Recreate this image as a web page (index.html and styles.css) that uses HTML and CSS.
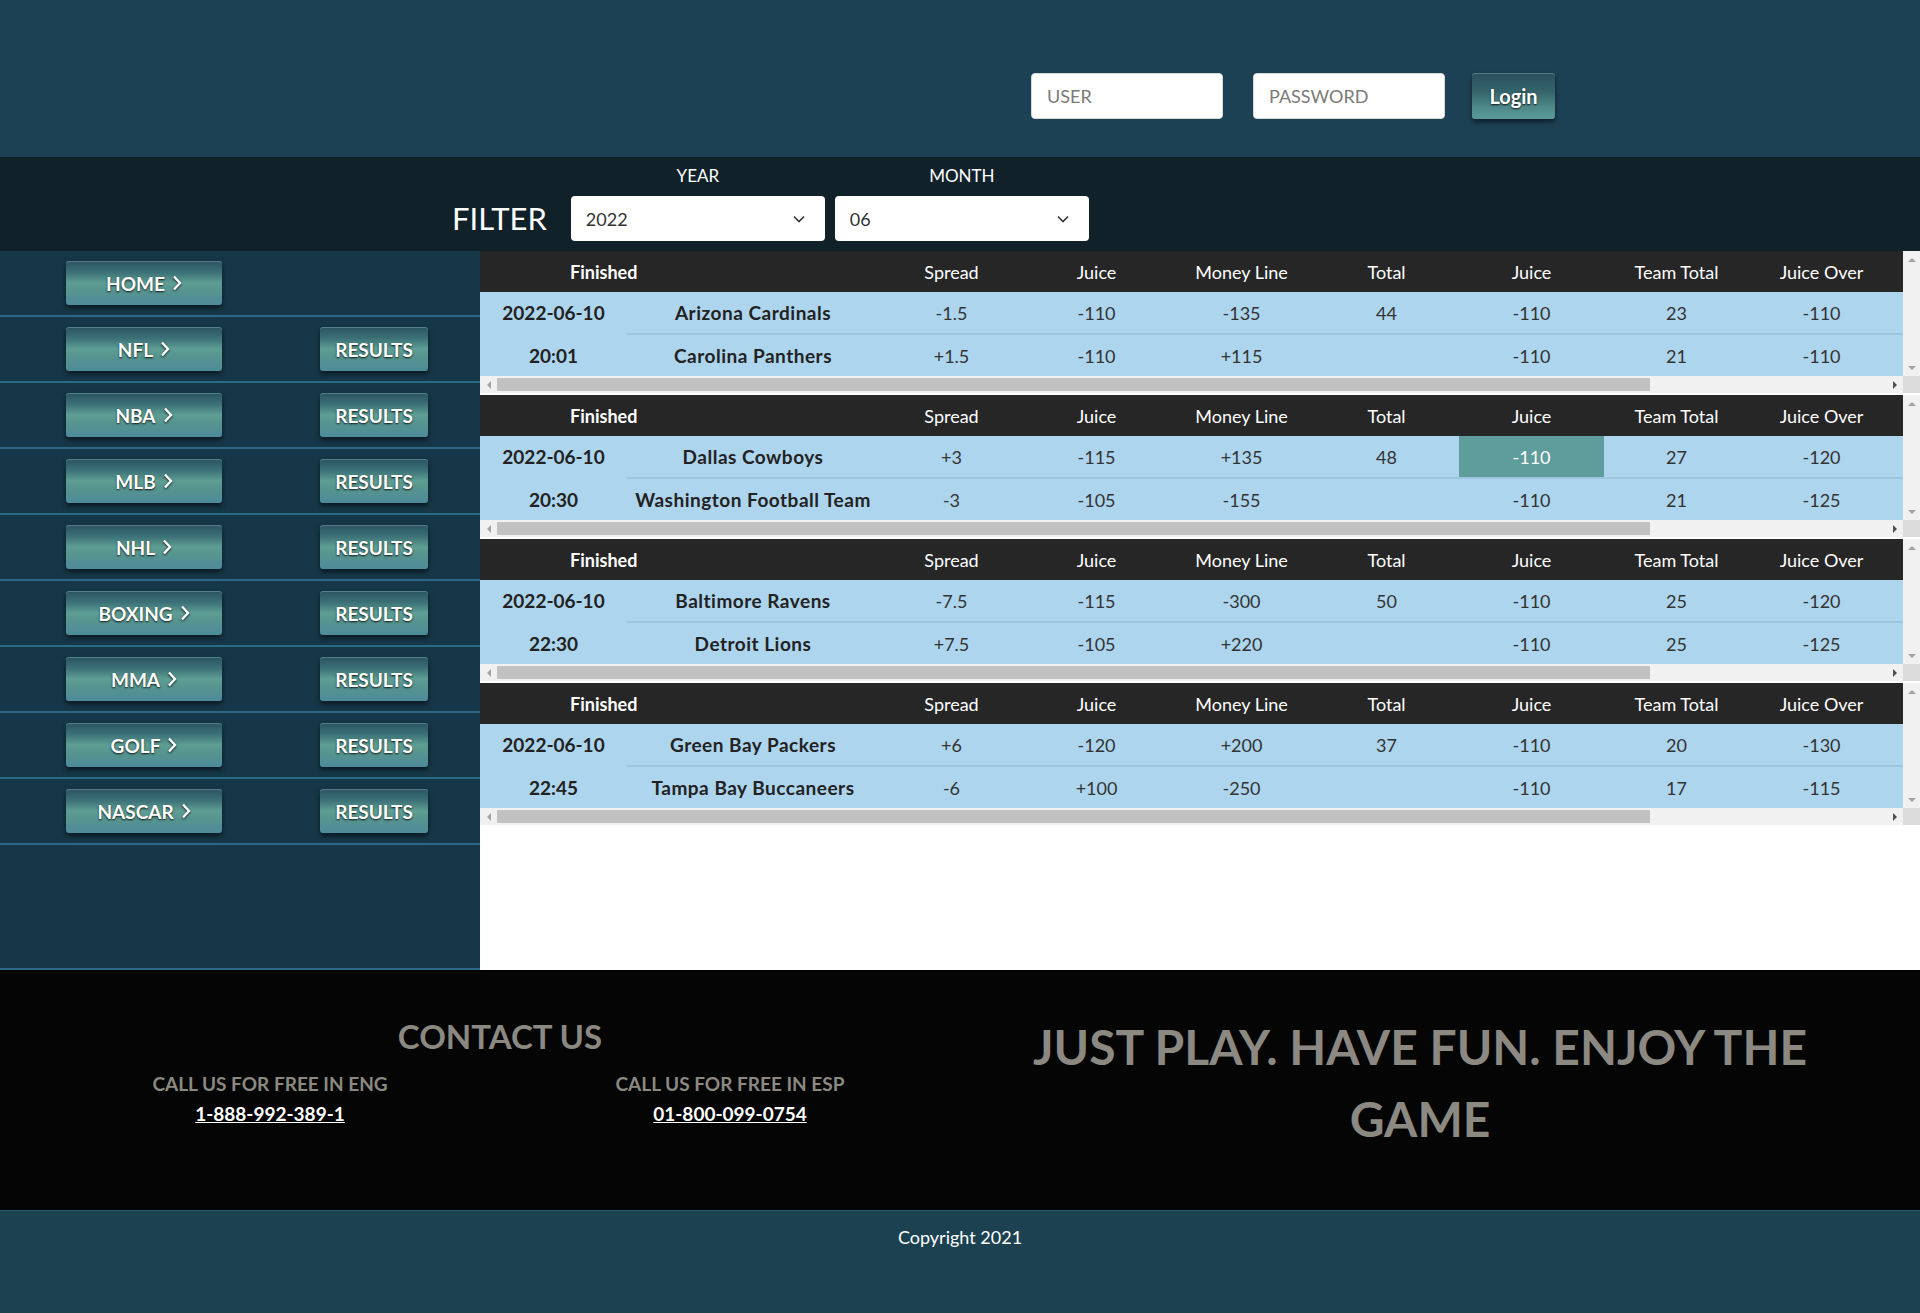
FILE: index.html
```html
<!DOCTYPE html>
<html lang="en">
<head>
<meta charset="utf-8">
<title>Results</title>
<link rel="stylesheet" href="styles.css">
</head>
<body>
<header class="topbar">
  <form class="login">
    <input class="field field-user" type="text" placeholder="USER">
    <input class="field field-pass" type="password" placeholder="PASSWORD">
    <button class="btn btn-login" type="button">Login</button>
  </form>
</header>

<section class="filterbar">
  <span class="filter-title">FILTER</span>
  <div class="filter-group">
    <span class="filter-label">YEAR</span>
    <div class="select"><span>2022</span><svg class="select-chev" width="12" height="8" viewBox="0 0 12 8"><path d="M1 1.5 L6 6.5 L11 1.5" fill="none" stroke="#333" stroke-width="1.6"/></svg></div>
  </div>
  <div class="filter-group">
    <span class="filter-label">MONTH</span>
    <div class="select"><span>06</span><svg class="select-chev" width="12" height="8" viewBox="0 0 12 8"><path d="M1 1.5 L6 6.5 L11 1.5" fill="none" stroke="#333" stroke-width="1.6"/></svg></div>
  </div>
</section>

<div class="layout">
  <nav class="sidebar">
    <div class="sport-row"><a class="btn btn-sport" href="#">HOME<svg class="chev" width="10" height="16" viewBox="0 0 10 16"><path d="M2 1.5 L8 8 L2 14.5" fill="none" stroke="#fff" stroke-width="2.4"/></svg></a></div>
    <div class="sport-row"><a class="btn btn-sport" href="#">NFL<svg class="chev" width="10" height="16" viewBox="0 0 10 16"><path d="M2 1.5 L8 8 L2 14.5" fill="none" stroke="#fff" stroke-width="2.4"/></svg></a><a class="btn btn-results" href="#">RESULTS</a></div>
    <div class="sport-row"><a class="btn btn-sport" href="#">NBA<svg class="chev" width="10" height="16" viewBox="0 0 10 16"><path d="M2 1.5 L8 8 L2 14.5" fill="none" stroke="#fff" stroke-width="2.4"/></svg></a><a class="btn btn-results" href="#">RESULTS</a></div>
    <div class="sport-row"><a class="btn btn-sport" href="#">MLB<svg class="chev" width="10" height="16" viewBox="0 0 10 16"><path d="M2 1.5 L8 8 L2 14.5" fill="none" stroke="#fff" stroke-width="2.4"/></svg></a><a class="btn btn-results" href="#">RESULTS</a></div>
    <div class="sport-row"><a class="btn btn-sport" href="#">NHL<svg class="chev" width="10" height="16" viewBox="0 0 10 16"><path d="M2 1.5 L8 8 L2 14.5" fill="none" stroke="#fff" stroke-width="2.4"/></svg></a><a class="btn btn-results" href="#">RESULTS</a></div>
    <div class="sport-row"><a class="btn btn-sport" href="#">BOXING<svg class="chev" width="10" height="16" viewBox="0 0 10 16"><path d="M2 1.5 L8 8 L2 14.5" fill="none" stroke="#fff" stroke-width="2.4"/></svg></a><a class="btn btn-results" href="#">RESULTS</a></div>
    <div class="sport-row"><a class="btn btn-sport" href="#">MMA<svg class="chev" width="10" height="16" viewBox="0 0 10 16"><path d="M2 1.5 L8 8 L2 14.5" fill="none" stroke="#fff" stroke-width="2.4"/></svg></a><a class="btn btn-results" href="#">RESULTS</a></div>
    <div class="sport-row"><a class="btn btn-sport" href="#">GOLF<svg class="chev" width="10" height="16" viewBox="0 0 10 16"><path d="M2 1.5 L8 8 L2 14.5" fill="none" stroke="#fff" stroke-width="2.4"/></svg></a><a class="btn btn-results" href="#">RESULTS</a></div>
    <div class="sport-row"><a class="btn btn-sport" href="#">NASCAR<svg class="chev" width="10" height="16" viewBox="0 0 10 16"><path d="M2 1.5 L8 8 L2 14.5" fill="none" stroke="#fff" stroke-width="2.4"/></svg></a><a class="btn btn-results" href="#">RESULTS</a></div>
  </nav>

  <main class="boards">
    <div class="board">
      <div class="board-view">
        <table class="odds">
          <colgroup><col class="c-when"><col class="c-team"><col class="c-num"><col class="c-num"><col class="c-num"><col class="c-num"><col class="c-num"><col class="c-num"><col class="c-num"><col class="c-pad"></colgroup>
          <thead><tr><th class="status" colspan="2">Finished</th><th>Spread</th><th>Juice</th><th>Money Line</th><th>Total</th><th>Juice</th><th>Team Total</th><th>Juice Over</th><th></th></tr></thead>
          <tbody>
            <tr><td class="when">2022-06-10</td><td class="team">Arizona Cardinals</td><td>-1.5</td><td>-110</td><td>-135</td><td>44</td><td>-110</td><td>23</td><td>-110</td><td></td></tr>
            <tr><td class="when">20:01</td><td class="team">Carolina Panthers</td><td>+1.5</td><td>-110</td><td>+115</td><td></td><td>-110</td><td>21</td><td>-110</td><td></td></tr>
          </tbody>
        </table>
      </div>
      <div class="vbar"><span class="sb-btn sb-up"></span><span class="sb-btn sb-down"></span></div>
      <div class="hbar"><span class="sb-btn sb-left"></span><span class="sb-track"><span class="sb-thumb"></span></span><span class="sb-btn sb-right"></span></div>
      <div class="sb-corner"></div>
    </div>
    <div class="board">
      <div class="board-view">
        <table class="odds">
          <colgroup><col class="c-when"><col class="c-team"><col class="c-num"><col class="c-num"><col class="c-num"><col class="c-num"><col class="c-num"><col class="c-num"><col class="c-num"><col class="c-pad"></colgroup>
          <thead><tr><th class="status" colspan="2">Finished</th><th>Spread</th><th>Juice</th><th>Money Line</th><th>Total</th><th>Juice</th><th>Team Total</th><th>Juice Over</th><th></th></tr></thead>
          <tbody>
            <tr><td class="when">2022-06-10</td><td class="team">Dallas Cowboys</td><td>+3</td><td>-115</td><td>+135</td><td>48</td><td class="picked">-110</td><td>27</td><td>-120</td><td></td></tr>
            <tr><td class="when">20:30</td><td class="team">Washington Football Team</td><td>-3</td><td>-105</td><td>-155</td><td></td><td>-110</td><td>21</td><td>-125</td><td></td></tr>
          </tbody>
        </table>
      </div>
      <div class="vbar"><span class="sb-btn sb-up"></span><span class="sb-btn sb-down"></span></div>
      <div class="hbar"><span class="sb-btn sb-left"></span><span class="sb-track"><span class="sb-thumb"></span></span><span class="sb-btn sb-right"></span></div>
      <div class="sb-corner"></div>
    </div>
    <div class="board">
      <div class="board-view">
        <table class="odds">
          <colgroup><col class="c-when"><col class="c-team"><col class="c-num"><col class="c-num"><col class="c-num"><col class="c-num"><col class="c-num"><col class="c-num"><col class="c-num"><col class="c-pad"></colgroup>
          <thead><tr><th class="status" colspan="2">Finished</th><th>Spread</th><th>Juice</th><th>Money Line</th><th>Total</th><th>Juice</th><th>Team Total</th><th>Juice Over</th><th></th></tr></thead>
          <tbody>
            <tr><td class="when">2022-06-10</td><td class="team">Baltimore Ravens</td><td>-7.5</td><td>-115</td><td>-300</td><td>50</td><td>-110</td><td>25</td><td>-120</td><td></td></tr>
            <tr><td class="when">22:30</td><td class="team">Detroit Lions</td><td>+7.5</td><td>-105</td><td>+220</td><td></td><td>-110</td><td>25</td><td>-125</td><td></td></tr>
          </tbody>
        </table>
      </div>
      <div class="vbar"><span class="sb-btn sb-up"></span><span class="sb-btn sb-down"></span></div>
      <div class="hbar"><span class="sb-btn sb-left"></span><span class="sb-track"><span class="sb-thumb"></span></span><span class="sb-btn sb-right"></span></div>
      <div class="sb-corner"></div>
    </div>
    <div class="board">
      <div class="board-view">
        <table class="odds">
          <colgroup><col class="c-when"><col class="c-team"><col class="c-num"><col class="c-num"><col class="c-num"><col class="c-num"><col class="c-num"><col class="c-num"><col class="c-num"><col class="c-pad"></colgroup>
          <thead><tr><th class="status" colspan="2">Finished</th><th>Spread</th><th>Juice</th><th>Money Line</th><th>Total</th><th>Juice</th><th>Team Total</th><th>Juice Over</th><th></th></tr></thead>
          <tbody>
            <tr><td class="when">2022-06-10</td><td class="team">Green Bay Packers</td><td>+6</td><td>-120</td><td>+200</td><td>37</td><td>-110</td><td>20</td><td>-130</td><td></td></tr>
            <tr><td class="when">22:45</td><td class="team">Tampa Bay Buccaneers</td><td>-6</td><td>+100</td><td>-250</td><td></td><td>-110</td><td>17</td><td>-115</td><td></td></tr>
          </tbody>
        </table>
      </div>
      <div class="vbar"><span class="sb-btn sb-up"></span><span class="sb-btn sb-down"></span></div>
      <div class="hbar"><span class="sb-btn sb-left"></span><span class="sb-track"><span class="sb-thumb"></span></span><span class="sb-btn sb-right"></span></div>
      <div class="sb-corner"></div>
    </div>
  </main>
</div>

<footer class="site-footer">
  <div class="contact">
    <h2 class="contact-title">CONTACT US</h2>
    <div class="contact-lines">
      <div class="contact-line">
        <h3>CALL US FOR FREE IN ENG</h3>
        <a href="#">1-888-992-389-1</a>
      </div>
      <div class="contact-line">
        <h3>CALL US FOR FREE IN ESP</h3>
        <a href="#">01-800-099-0754</a>
      </div>
    </div>
  </div>
  <div class="slogan">
    <h2>JUST PLAY. HAVE FUN. ENJOY THE GAME</h2>
  </div>
</footer>

<div class="copyright">Copyright 2021</div>
</body>
</html>
```

FILE: styles.css
```css
* { box-sizing: border-box; }

body {
  margin: 0;
  font-family: Lato, "Open Sans", "Liberation Sans", sans-serif;
  background: #1c4252;
}

/* ---------- top bar ---------- */
.topbar {
  height: 157px;
  background: #1d4154;
  display: flex;
  justify-content: flex-end;
  align-items: flex-start;
  padding: 73px 365px 0 0;
}
.login {
  display: flex;
  align-items: center;
  margin: 0;
}
.field {
  width: 192px;
  height: 46px;
  border: 1px solid #d8d8d8;
  border-radius: 4px;
  padding: 0 15px;
  font-family: inherit;
  font-size: 18px;
  color: #333;
  background: #fff;
}
.field::placeholder { color: #7a7a7a; }
.field-user { margin-right: 30px; }
.field-pass { margin-right: 27px; }

.btn {
  display: inline-flex;
  align-items: center;
  justify-content: center;
  height: 44px;
  border: 0;
  border-radius: 3px;
  background: linear-gradient(to bottom, #2a5361 0%, #3c7178 26%, #5e9e93 50%, #56948f 68%, #4e8b9b 100%);
  color: #fff;
  font-family: inherit;
  font-weight: 700;
  font-size: 19px;
  text-decoration: none;
  text-shadow: 0 1px 2px rgba(0, 0, 0, 0.85);
  box-shadow: 0 3px 5px rgba(0, 0, 0, 0.55), inset 0 1px 0 rgba(160, 210, 210, 0.35);
}
.btn-login {
  width: 83px;
  height: 46px;
  font-size: 20px;
  background: linear-gradient(to bottom, #2a4f5b 0%, #35636b 40%, #4f8a8a 75%, #5b9a9a 100%);
}

/* ---------- filter bar ---------- */
.filterbar {
  height: 94px;
  background: #10212a;
  display: flex;
  align-items: flex-end;
  gap: 10px;
  padding: 0 0 10px 452px;
}
.filter-title {
  color: #fff;
  font-size: 31px;
  line-height: 45px;
  margin-right: 14px;
}
.filter-group {
  display: flex;
  flex-direction: column;
  align-items: center;
}
.filter-label {
  color: #fff;
  font-size: 17px;
  line-height: 20px;
  margin-bottom: 10px;
}
.select {
  width: 254px;
  height: 45px;
  background: #fff;
  border-radius: 4px;
  display: flex;
  align-items: center;
  justify-content: space-between;
  padding: 0 20px 0 15px;
  font-size: 18px;
  color: #333;
}

/* ---------- sidebar + boards ---------- */
.layout {
  display: flex;
  min-height: 719px;
}
.sidebar {
  width: 480px;
  flex: none;
  background: #153748;
  border-bottom: 2px solid #2a6a87;
}
.sport-row {
  height: 66px;
  border-bottom: 2px solid #2a6a87;
  display: flex;
  align-items: center;
  gap: 98px;
  padding-left: 66px;
}
.btn-sport {
  width: 156px;
  gap: 7px;
}
.chev { filter: drop-shadow(0 1px 1px rgba(0, 0, 0, 0.8)); }
.btn-results { width: 108px; }

.boards {
  flex: 1;
  min-width: 0;
  background: #fff;
}
.board {
  display: grid;
  grid-template-columns: minmax(0, 1fr) 17px;
  grid-template-rows: auto 17px;
  margin-bottom: 2px;
}
.board-view { overflow: hidden; }

.odds {
  width: 1704px;
  table-layout: fixed;
  border-collapse: collapse;
  font-size: 18px;
}
.c-when { width: 147px; }
.c-team { width: 252px; }
.c-num { width: 145px; }
.c-pad { width: 290px; }

.odds th {
  height: 41px;
  padding: 0;
  background: #262626;
  color: #fff;
  font-weight: 400;
  text-align: center;
}
.odds th.status {
  text-align: left;
  padding-left: 90px;
  font-weight: 700;
}
.odds td {
  height: 42px;
  padding: 0;
  background: #add5ee;
  color: #333;
  text-align: center;
}
.odds tbody tr + tr td { border-top: 2px solid #9cc6e0; }
.odds tbody tr + tr td.when { border-top-color: #add5ee; }
.odds td.when {
  font-weight: 700;
  color: #222;
  font-size: 19px;
}
.odds td.team {
  font-weight: 700;
  color: #222;
  font-size: 19px;
  letter-spacing: 0.5px;
}
.odds td.picked {
  background: #5f9c9c;
  color: #fff;
}

/* scrollbars of the board */
.vbar {
  background: #f1f1f1;
  display: flex;
  flex-direction: column;
  justify-content: space-between;
}
.hbar {
  height: 17px;
  background: #f1f1f1;
  display: flex;
}
.sb-corner { background: #dcdcdc; }
.sb-btn {
  width: 17px;
  height: 17px;
  flex: none;
  display: flex;
  align-items: center;
  justify-content: center;
}
.sb-btn::before {
  content: "";
  width: 0;
  height: 0;
  border-style: solid;
  border-color: transparent;
}
.sb-left::before { border-width: 4px 4px 4px 0; border-right-color: #a3a3a3; }
.sb-right::before { border-width: 4px 0 4px 4px; border-left-color: #505050; }
.sb-up::before { border-width: 0 4px 4px 4px; border-bottom-color: #a3a3a3; }
.sb-down::before { border-width: 4px 4px 0 4px; border-top-color: #a3a3a3; }
.sb-track {
  flex: 1;
  padding: 2px 0;
}
.sb-thumb {
  display: block;
  width: 83%;
  height: 100%;
  background: #c1c1c1;
}

/* ---------- footer ---------- */
.site-footer {
  height: 240px;
  background: #050505;
  display: grid;
  grid-template-columns: 920px 920px;
  padding: 0 40px;
  color: #8b8981;
}
.contact { padding-top: 46px; text-align: center; }
.contact-title {
  margin: 0 0 16px;
  font-size: 33px;
  line-height: 40px;
  font-weight: 700;
}
.contact-lines {
  display: grid;
  grid-template-columns: 1fr 1fr;
}
.contact-line h3 {
  margin: 0 0 6px;
  font-size: 19px;
  line-height: 24px;
  font-weight: 700;
}
.contact-line a {
  color: #fff;
  font-size: 19px;
  line-height: 24px;
  font-weight: 700;
}
.slogan {
  padding-top: 41px;
  display: flex;
  justify-content: center;
}
.slogan h2 {
  width: 800px;
  margin: 0;
  text-align: center;
  font-size: 48px;
  line-height: 72px;
  font-weight: 700;
}

.copyright {
  height: 103px;
  border-top: 1px solid #2c5c6c;
  background: #1c4252;
  color: #fff;
  text-align: center;
  font-size: 18px;
  line-height: 24px;
  padding-top: 14px;
}
```
